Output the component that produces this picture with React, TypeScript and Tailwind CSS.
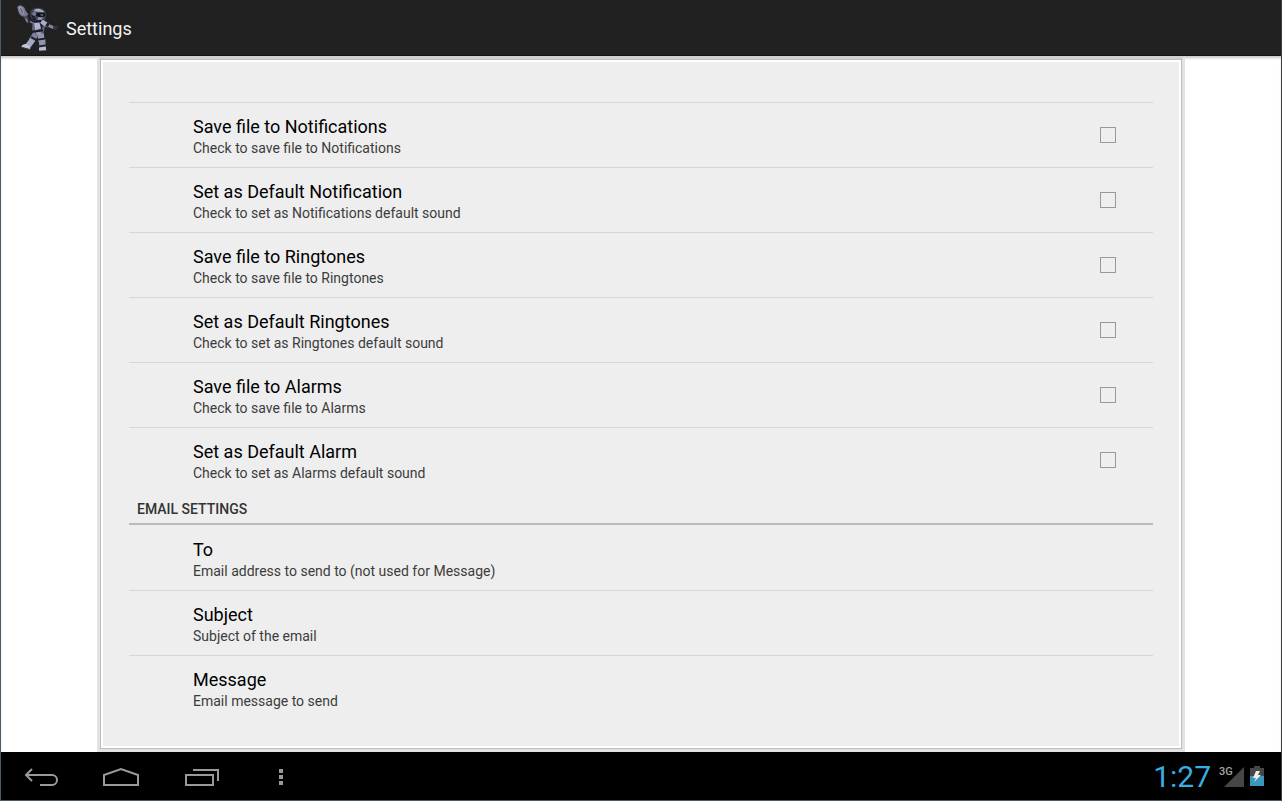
import { useState } from "react"
import { clsx } from "clsx"

const soundSettings = [
  { id: "save-notifications", title: "Save file to Notifications", summary: "Check to save file to Notifications" },
  { id: "default-notification", title: "Set as Default Notification", summary: "Check to set as Notifications default sound" },
  { id: "save-ringtones", title: "Save file to Ringtones", summary: "Check to save file to Ringtones" },
  { id: "default-ringtones", title: "Set as Default Ringtones", summary: "Check to set as Ringtones default sound" },
  { id: "save-alarms", title: "Save file to Alarms", summary: "Check to save file to Alarms" },
  { id: "default-alarm", title: "Set as Default Alarm", summary: "Check to set as Alarms default sound" },
]

const emailSettings = [
  { id: "to", title: "To", summary: "Email address to send to (not used for Message)" },
  { id: "subject", title: "Subject", summary: "Subject of the email" },
  { id: "message", title: "Message", summary: "Email message to send" },
]

function RobotLogo() {
  return (
    <svg viewBox="18 9 126 150" className="h-[50px] w-[42px]" aria-hidden="true">
      {/* Megaphone */}
      <path d="M22 20 Q29 12 37 18 Q45 22 47 32 L55 43 L48 51 L36 49 Q24 43 22 20 Z" fill="#777a8e" />
      <path d="M25 22 Q30 17 36 23 Q43 31 42 43 Q30 42 25 22 Z" fill="#9c9fb5" />
      <path d="M30 26 Q36 29 38 39" fill="none" stroke="#5c5f74" strokeWidth="4" />
      {/* Raised arm */}
      <path d="M46 49 L54 66" stroke="#4a4c5e" strokeWidth="10" />
      <path d="M51 64 L74 77" stroke="#232431" strokeWidth="13" />
      <path d="M47 56 L54 67 M60 64 L70 70" stroke="#85889f" strokeWidth="4" />
      {/* Head */}
      <path d="M61 37 Q66 22 84 23 Q103 24 108 40 L105 59 L93 66 L73 62 L62 52 Z" fill="#454758" />
      <path d="M70 33 Q77 25 89 27 Q99 29 103 37 L84 35 Z" fill="#a9acc0" />
      <path d="M66 40 L76 34 L79 45 L69 48 Z" fill="#777a92" />
      <path d="M80 38 L106 39 L104 49 L91 53 L78 47 Z" fill="#10111a" />
      <path d="M63 44 L74 49 L79 60 L70 59 Z" fill="#1c1d28" />
      <path d="M84 51 L99 52 L94 62 L83 59 Z" fill="#8d90a7" />
      <path d="M91 42 L101 43 L98 48 L92 47 Z" fill="#5b5e74" />
      {/* Torso */}
      <path d="M68 66 L97 63 L106 76 L99 104 L74 106 L66 87 Z" fill="#62657e" />
      <path d="M72 69 L88 68 L93 84 L76 91 Z" fill="#b1b4cc" />
      <path d="M89 68 L99 77 L95 90 Z" fill="#1a1b26" />
      <path d="M69 95 L99 91 M72 65 L98 62" stroke="#161720" strokeWidth="6" />
      <path d="M79 100 L93 99" stroke="#a5a8c1" strokeWidth="5" />
      {/* Outstretched arm */}
      <path d="M99 67 L112 75" stroke="#abaec6" strokeWidth="13" strokeLinecap="round" />
      <path d="M109 72 L119 79" stroke="#1c1d28" strokeWidth="11" />
      <path d="M116 77 L131 83" stroke="#85889f" strokeWidth="9" />
      <path d="M129 81 L144 81 M130 84 L140 89" stroke="#3b3d4e" strokeWidth="4" />
      {/* Legs */}
      <path d="M77 102 L65 122" stroke="#7d809a" strokeWidth="18" />
      <path d="M60 115 L75 124 L61 143 L46 134 Z" fill="#a5a8c0" />
      <path d="M63 111 L79 120" stroke="#191a25" strokeWidth="6" />
      <path d="M47 131 L59 139 L61 148 L34 141 L37 135 Z" fill="#c3c5d9" />
      <path d="M35 142 L60 149" stroke="#3c3e50" strokeWidth="3" />
      <path d="M92 101 L95 125" stroke="#9194ad" strokeWidth="19" />
      <path d="M86 118 L106 116 L107 145 L89 146 Z" fill="#9194ad" />
      <path d="M84 119 L105 116 M88 139 L107 136" stroke="#191a25" strokeWidth="5" />
      <path d="M87 143 L107 140 L109 151 L87 152 Z" fill="#b8bace" />
    </svg>
  )
}

function SettingText({ title, summary }: { title: string; summary: string }) {
  return (
    <span className="flex flex-col pt-0.5">
      <span className="text-lg leading-6 text-black">{title}</span>
      <span className="text-sm leading-[18px] text-[#3c3c3c]">{summary}</span>
    </span>
  )
}

function StatusIcons() {
  return (
    <div className="flex items-center">
      <svg viewBox="0 0 26 24" className="h-6 w-[26px]" role="img" aria-label="3G signal">
        <path d="M25 2 V22 H5 Z" fill="#464646" />
        <text x="0" y="10" fill="#a6a6a6" fontFamily="Roboto, sans-serif" fontSize="11" fontWeight="500">3G</text>
      </svg>
      <svg viewBox="0 0 14 22" className="ml-[5px] h-[22px] w-3.5" role="img" aria-label="Battery charging">
        <path d="M4 0 H10 V2 H14 V10 H0 V2 H4 Z" fill="#464646" />
        <path d="M0 10 H14 V20 H0 Z" fill="#3a97bb" />
        <path d="M6 5 H10 L8 9 H11 L4 16 L6 12 H3 Z" fill="#f0f0e8" />
      </svg>
    </div>
  )
}

export default function App() {
  const [checked, setChecked] = useState<Record<string, boolean>>({})

  const toggle = (id: string) => {
    setChecked((prev) => ({ ...prev, [id]: !prev[id] }))
  }

  return (
    <div className="flex min-h-screen flex-col border-b border-l border-r border-b-[#4b5966] border-l-[#4b5966] border-r-[#3c3c3c] bg-white font-['Roboto',sans-serif]">
      <header className="flex h-14 shrink-0 items-center gap-2 border-b border-[#141414] bg-[#212121] pl-[15px]">
        <RobotLogo />
        <h1 className="pt-0.5 text-lg text-[#f3f3f3]">Settings</h1>
      </header>

      <main className="flex grow flex-col bg-white px-24 shadow-[inset_0_3px_3px_-1px_#c8c4c4]">
        <div className="flex grow flex-col border-3 border-[#e2e2e2] border-t-[#d0d0d0]">
          <div className="flex grow flex-col border border-[#bdbdbd]">
            <div className="grow border-2 border-white bg-[#eee] px-[26px]">
              {/* Bottom of the entry that is scrolled out of view */}
              <div className="h-10" />

              <ul>
                {soundSettings.map((item) => (
                  <li key={item.id} className="h-[65px] border-t border-[#d6d6d6]">
                    <label htmlFor={item.id} className="flex h-full items-center justify-between pr-[37px] pl-16">
                      <SettingText title={item.title} summary={item.summary} />
                      <input
                        id={item.id}
                        type="checkbox"
                        checked={!!checked[item.id]}
                        onChange={() => toggle(item.id)}
                        className="size-4 appearance-none border border-[#999] checked:bg-[#33b5e5]"
                      />
                    </label>
                  </li>
                ))}
              </ul>

              <h2 className="flex h-[33px] items-center border-b-2 border-[#bababa] pt-[3px] pl-2 text-sm font-medium text-[#333]">
                EMAIL SETTINGS
              </h2>
              <ul>
                {emailSettings.map((item, index) => (
                  <li key={item.id} className={clsx("h-[65px]", index > 0 && "border-t border-[#d6d6d6]")}>
                    <button type="button" className="flex h-full w-full items-center pl-16 text-left">
                      <SettingText title={item.title} summary={item.summary} />
                    </button>
                  </li>
                ))}
              </ul>
            </div>
          </div>
        </div>
      </main>

      <footer className="flex h-12 shrink-0 items-center justify-between bg-black pt-0.5 pr-[17px]">
        <nav className="flex">
          <button type="button" aria-label="Back" className="flex h-12 w-20 items-center justify-center">
            <svg viewBox="0 0 36 20" className="h-5 w-9" fill="none" stroke="#9a9a9a" strokeWidth="2">
              <path d="M9 2 L3 8 L9 14 M3 8 H29 A5 5 0 0 1 29 18 H17" />
            </svg>
          </button>
          <button type="button" aria-label="Home" className="flex h-12 w-20 items-center justify-center">
            <svg viewBox="0 0 38 20" className="h-5 w-[38px]" fill="none" stroke="#9a9a9a" strokeWidth="2">
              <path d="M2 18 V8 L19 2 L36 8 V18 Z" />
            </svg>
          </button>
          <button type="button" aria-label="Recent apps" className="flex h-12 w-20 items-center justify-center">
            <svg viewBox="0 0 36 20" className="h-5 w-9" fill="none" stroke="#9a9a9a" strokeWidth="2">
              <path d="M3 8 H30 V18 H3 Z M10 3 H35 V14" />
            </svg>
          </button>
          <button type="button" aria-label="More options" className="flex h-12 w-20 items-center justify-center">
            <svg viewBox="0 0 4 18" className="h-[18px] w-1" fill="#9a9a9a">
              <path d="M0 1 H4 V5 H0 Z M0 7 H4 V11 H0 Z M0 13 H4 V17 H0 Z" />
            </svg>
          </button>
        </nav>
        <div className="flex items-center gap-2">
          <time className="text-3xl text-[#38aee0]">1:27</time>
          <StatusIcons />
        </div>
      </footer>
    </div>
  )
}
